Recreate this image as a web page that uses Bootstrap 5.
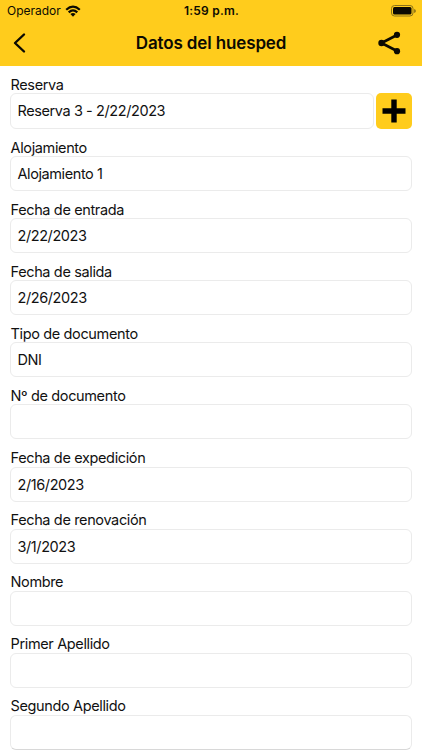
<!DOCTYPE html>
<html lang="es">
<head>
<meta charset="utf-8">
<meta name="viewport" content="width=device-width, initial-scale=1">
<title>Datos del huesped</title>
<link href="https://cdn.jsdelivr.net/npm/bootstrap@5.3.0/dist/css/bootstrap.min.css" rel="stylesheet">
<style>
body{font-family:Inter,"Liberation Sans",sans-serif;color:#111;height:750px;overflow:hidden}
.top-area{background:#ffcc1c;height:66px;color:#0c0a02}
.status-line{height:22px;font-size:12px;padding:0 6px 0 7px}
.status-line .clock{font-weight:600;letter-spacing:.2px}
.title-line{height:42px;padding:0 12px}
.title-line h1{font-size:17px;font-weight:600;line-height:22px;letter-spacing:-.13px}
.side{flex:1 1 0}
.share-icon{margin-right:8px}
.form-area{padding:9px 10px 0}
.field{margin-bottom:8.1px}
.field .form-label{font-size:14.5px;line-height:21px;height:19px;padding-left:.5px;white-space:nowrap;letter-spacing:-.36px}
.field:nth-child(n+7) .form-label{line-height:19px}
.field .form-control{height:35px;font-size:14.5px;line-height:33px;padding:0 6.5px;border:1px solid #ebebeb;border-radius:6px;color:#111;letter-spacing:-.41px}
.field.first .form-label{height:18px;line-height:19px}
.field.first .form-control{height:36px;line-height:34px;margin-right:2px}
.field:last-child .form-control{border-bottom-color:#d8d8d8}
.add-btn{width:36px;height:36px;background:#ffcc1c;border-radius:5px}
</style>
<script src="https://cdn.jsdelivr.net/npm/bootstrap@5.3.0/dist/js/bootstrap.bundle.min.js"></script>
</head>
<body class="bg-white">
<header class="top-area">
  <div class="status-line d-flex align-items-center">
    <div class="side d-flex align-items-center gap-1"><span>Operador</span>
      <svg width="16" height="12" viewBox="0 0 16 12" fill="none" stroke="#0c0a02" stroke-width="2.2"><path d="M1.2 4.7Q8-1.5 14.8 4.7M3.7 7.4Q8 3.4 12.3 7.4"/><path d="M5.4 9Q8 6.9 10.6 9L8 11.7Z" fill="#0c0a02" stroke="none"/></svg>
    </div>
    <span class="clock">1:59 p.m.</span>
    <div class="side d-flex justify-content-end">
      <svg width="25" height="12" viewBox="0 0 25 12"><rect x=".5" y=".5" width="21.5" height="10.5" rx="3" fill="none" stroke="#8b7219"/><rect x="2" y="2" width="18.5" height="7.5" rx="1.5" fill="#0c0a02"/><path d="M23.3 4v4q1.4-.5 1.4-2t-1.4-2Z" fill="#6b5610"/></svg>
    </div>
  </div>
  <nav class="title-line d-flex align-items-center">
    <div class="side d-flex"><svg width="16" height="22" viewBox="0 0 16 22" fill="none" stroke="#0c0a02" stroke-width="2.4" stroke-linecap="round" stroke-linejoin="round"><path d="M12 2.500 3 11l9 8.500"/></svg></div>
    <h1 class="m-0">Datos del huesped</h1>
    <div class="side d-flex justify-content-end"><svg class="share-icon" width="24" height="24" viewBox="0 0 24 24" fill="#0c0a02"><path d="M19 4 3.500 12 19 20" fill="none" stroke="#0c0a02" stroke-width="2.700"/><circle cx="19" cy="3.800" r="3.100"/><circle cx="3.500" cy="12" r="3.200"/><circle cx="19" cy="20.200" r="3.100"/></svg></div>
  </nav>
</header>
<main class="form-area">
  <div class="field first"><div class="form-label m-0">Reserva</div>
    <div class="d-flex"><div class="form-control flex-fill">Reserva 3 - 2/22/2023</div>
      <button type="button" class="btn add-btn border-0 p-0 flex-shrink-0 d-flex align-items-center justify-content-center" aria-label="Agregar"><svg width="24" height="24" viewBox="0 0 24 24"><path d="M9.300.5h5.400v8.800h8.800v5.400h-8.800v8.800H9.300v-8.800H.5V9.300h8.800Z"/></svg></button></div></div>
  <div class="field"><div class="form-label m-0">Alojamiento</div><div class="form-control">Alojamiento 1</div></div>
  <div class="field"><div class="form-label m-0">Fecha de entrada</div><div class="form-control">2/22/2023</div></div>
  <div class="field"><div class="form-label m-0">Fecha de salida</div><div class="form-control">2/26/2023</div></div>
  <div class="field"><div class="form-label m-0">Tipo de documento</div><div class="form-control">DNI</div></div>
  <div class="field"><div class="form-label m-0">Nº de documento</div><div class="form-control"></div></div>
  <div class="field"><div class="form-label m-0">Fecha de expedición</div><div class="form-control">2/16/2023</div></div>
  <div class="field"><div class="form-label m-0">Fecha de renovación</div><div class="form-control">3/1/2023</div></div>
  <div class="field"><div class="form-label m-0">Nombre</div><div class="form-control"></div></div>
  <div class="field"><div class="form-label m-0">Primer Apellido</div><div class="form-control"></div></div>
  <div class="field"><div class="form-label m-0">Segundo Apellido</div><div class="form-control"></div></div>
</main>
</body>
</html>
